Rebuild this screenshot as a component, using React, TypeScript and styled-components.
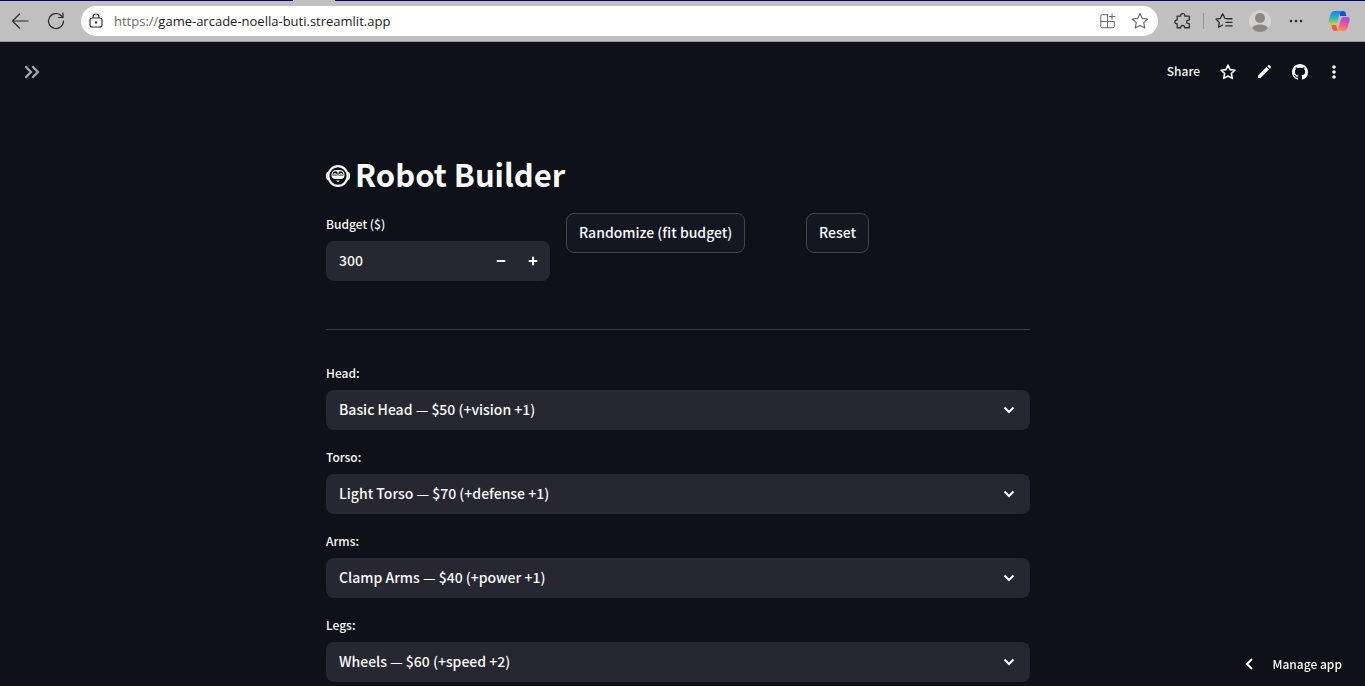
import React from "react";
import styled, { createGlobalStyle } from "styled-components";

const GlobalStyle = createGlobalStyle`
  * { box-sizing: border-box; }
  body { margin: 0; background: #0e1117; overflow: hidden; }
  button, input, select { font: inherit; color: inherit; }
  svg { display: block; }
`;

const Window = styled.div`
  display: flex;
  flex-direction: column;
  height: 100vh;
  color: #fafafa;
  font-family: "Noto Sans CJK SC", "Open Sans", sans-serif;
  font-size: 14px;
  font-weight: 500;
  line-height: 20px;
`;

const BrowserBar = styled.header`
  flex: none;
  display: flex;
  align-items: center;
  height: 42px;
  padding: 0 14px 0 10px;
  background: #c0c0c0;
  border-top: 1px solid #00007b;
  border-bottom: 1px solid #9b9b9b;
  color: #2b2b2b;
`;

const TabNotch = styled.span`
  position: absolute;
  top: 0;
  left: 293px;
  width: 42px;
  height: 1px;
  background: #c0c0c0;
`;

const IconButton = styled.button<{ $size?: number; $color?: string }>`
  flex: none;
  display: grid;
  place-items: center;
  width: ${(p) => p.$size ?? 20}px;
  height: ${(p) => p.$size ?? 20}px;
  padding: 0;
  border: 0;
  background: none;
  color: ${(p) => p.$color ?? "inherit"};
`;

const IconGroup = styled.div<{ $gap: number }>`
  display: flex;
  align-items: center;
  gap: ${(p) => p.$gap}px;
`;

const AddressBar = styled.div`
  flex: 1;
  display: flex;
  align-items: center;
  gap: 10px;
  height: 30px;
  margin: 0 15px;
  padding: 0 8px 0 7px;
  border-radius: 15px;
  background: #fff;
`;

const Url = styled.a`
  flex: 1;
  color: #1b1b1b;
  text-decoration: none;
  font: 13px/20px "Open Sans", "Noto Sans", sans-serif;
  span { color: #6b6b6b; }
`;

const Divider = styled.span`
  width: 1px;
  height: 16px;
  background: #959595;
`;

const Page = styled.div`
  flex: 1;
  min-height: 0;
  overflow: hidden;
`;

const Toolbar = styled.div`
  display: flex;
  align-items: center;
  justify-content: space-between;
  height: 60px;
  padding: 0 23px 0 22px;
`;

const TextButton = styled.button`
  padding: 0 0 2px;
  border: 0;
  background: none;
  font-size: 12px;
`;

const Content = styled.div`
  padding: 48px 9px 0 0;
`;

const Main = styled.main`
  max-width: 704px;
  margin: 0 auto;
`;

const Title = styled.h1`
  display: flex;
  align-items: center;
  gap: 5px;
  margin: 0 0 15px;
  font-size: 31px;
  line-height: 48px;
  font-weight: 700;
  svg { margin-top: 4px; }
`;

const Controls = styled.section`
  display: grid;
  grid-template-columns: repeat(3, minmax(0, 1fr));
  align-items: start;
  gap: 16px;
`;

const Field = styled.div`
  display: flex;
  flex-direction: column;
  gap: 6px;
`;

const Label = styled.label`
  font-size: 12px;
  line-height: 22px;
`;

const NumberBox = styled.div`
  display: flex;
  align-items: center;
  height: 40px;
  padding-right: 1px;
  border-radius: 8px;
  background: #262730;
`;

const NumberInput = styled.input`
  flex: 1;
  min-width: 0;
  height: 40px;
  padding: 0 13px 2px;
  border: 0;
  background: none;
`;

const OutlineButton = styled.button`
  justify-self: start;
  height: 40px;
  padding: 0 12px 2px;
  border: 1px solid #41444c;
  border-radius: 8px;
  background: #131720;
`;

const Rule = styled.hr`
  height: 1px;
  margin: 48px 0 32px;
  border: 0;
  background: #3b3d45;
`;

const Parts = styled.section`
  display: flex;
  flex-direction: column;
  gap: 16px;
`;

const SelectBox = styled.div`
  display: grid;
  align-items: center;
  > * { grid-area: 1 / 1; }
  svg { justify-self: end; margin-right: 15px; pointer-events: none; }
`;

const Select = styled.select`
  appearance: none;
  height: 40px;
  padding: 0 40px 2px 13px;
  border: 0;
  border-radius: 8px;
  background: #262730;
`;

const ManageButton = styled.button`
  position: fixed;
  right: 23px;
  bottom: 10px;
  display: flex;
  align-items: center;
  gap: 20px;
  padding: 0;
  border: 0;
  background: none;
  font-size: 12px;
  line-height: 24px;
`;

const Line = ({ d, size = 20, width = 1.2 }: { d: string; size?: number; width?: number }) => (
  <svg width={size} height={size} viewBox="0 0 20 20" fill="none" stroke="currentColor" strokeWidth={width} strokeLinecap="round" strokeLinejoin="round">
    <path d={d} />
  </svg>
);

const STAR = "M10 2.4l2.3 5 5.4.6-4 3.7 1.1 5.4-4.8-2.7-4.8 2.7 1.1-5.4-4-3.7 5.4-.6z";

const parts = [
  { id: "head", label: "Head:", value: "Basic Head — $50 (+vision +1)" },
  { id: "torso", label: "Torso:", value: "Light Torso — $70 (+defense +1)" },
  { id: "arms", label: "Arms:", value: "Clamp Arms — $40 (+power +1)" },
  { id: "legs", label: "Legs:", value: "Wheels — $60 (+speed +2)" },
];

const RobotFace = () => (
  <svg width="24" height="24" viewBox="0 0 24 24" fill="none" stroke="#fafafa">
    <ellipse cx="12" cy="12" rx="9.6" ry="9.8" strokeWidth="2.2" />
    <path d="M2 8.500Q.6 9.500.6 12T2 15.500M22 8.500q1.400 1 1.400 3.500T22 15.500" strokeWidth="1.600" />
    <path d="M5.500 11q0-5 5-5h3q5 0 5 5 0 4-4 4h-5q-4 0-4-4z" fill="#fafafa" stroke="none" />
    <path d="M6.500 11.500q0-4.200 3.200-4.200 1.900 0 1.900 2.200v2zM17.500 11.500q0-4.200-3.200-4.200-1.900 0-1.900 2.200v2z" fill="#0e1117" stroke="none" />
    <path d="M7.500 11q1.400-2.800 3.200 0M13.300 11q1.800-2.800 3.200 0" strokeWidth="1.100" />
    <path d="M10.200 16.500h3.600L12 18.300z" fill="#fafafa" stroke="none" />
  </svg>
);

const Github = () => (
  <svg width="16" height="16" viewBox="0 0 16 16" fill="currentColor">
    <path d="M8 0C3.580 0 0 3.580 0 8c0 3.540 2.290 6.530 5.470 7.590.4.070.55-.17.55-.38 0-.19-.01-.82-.01-1.490-2.010.37-2.530-.49-2.690-.94-.09-.23-.48-.94-.82-1.130-.28-.15-.68-.52-.01-.53.63-.01 1.080.58 1.230.82.72 1.210 1.870.87 2.330.66.070-.52.28-.87.51-1.070-1.780-.2-3.640-.89-3.640-3.950 0-.87.31-1.590.82-2.150-.08-.2-.36-1.020.08-2.120 0 0 .67-.21 2.200.82.64-.18 1.320-.27 2-.27s1.360.09 2 .27c1.530-1.040 2.200-.82 2.200-.82.44 1.100.16 1.920.08 2.120.51.56.82 1.270.82 2.150 0 3.070-1.870 3.750-3.650 3.950.29.25.54.73.54 1.480 0 1.070-.01 1.930-.01 2.200 0 .21.15.46.55.38A8.010 8.010 0 0 0 16 8c0-4.420-3.580-8-8-8z" />
  </svg>
);

const Copilot = () => (
  <svg width="24" height="24" viewBox="0 0 24 24">
    <defs>
      <linearGradient id="cool" x1="0" y1="0" x2="0" y2="1">
        <stop offset="0" stopColor="#1684e8" /><stop offset=".5" stopColor="#2ab4c9" /><stop offset="1" stopColor="#e5cf25" />
      </linearGradient>
      <linearGradient id="warm" x1=".7" y1="0" x2=".3" y2="1">
        <stop offset="0" stopColor="#a54be8" /><stop offset=".5" stopColor="#f0529a" /><stop offset="1" stopColor="#ff9a4a" />
      </linearGradient>
    </defs>
    <path d="M13 2h3q2 0 2.700 2l.8 3H13z" fill="#1854c4" />
    <path d="M7.500 2H15q-1.600.5-2.300 3l-2.200 8q-.8 3-3.500 3H4Q.5 16 1.500 12l2.200-7Q4.700 2 7.500 2z" fill="url(#cool)" />
    <path d="M11 22H8q-2 0-2.700-2l-.8-4H9z" fill="#f05a3c" />
    <path d="M16.500 22H9q1.600-.5 2.300-3l2.200-8q.8-3 3.500-3h3q3.500 0 2.500 4l-2.200 7q-1 3-4 3z" fill="url(#warm)" />
  </svg>
);

export default function App() {
  return (
    <Window>
      <GlobalStyle />
      <BrowserBar>
        <TabNotch />
        <IconGroup as="nav" $gap={16} aria-label="Browser navigation">
          <IconButton aria-label="Back"><Line d="M18 10H2.500M9.500 3L2.500 10l7 7" /></IconButton>
          <IconButton aria-label="Reload"><Line d="M17.500 10a7.500 7.500 0 1 1-2.400-5.500L17 6.500M17 2v4.500h-4.500" /></IconButton>
        </IconGroup>
        <AddressBar>
          <IconButton $size={16} aria-label="Site information">
            <svg width="14" height="16" viewBox="0 0 14 16" fill="none" stroke="currentColor" strokeWidth="1.100">
              <rect x="1" y="5" width="12" height="9" rx="2" /><path d="M4 5V4q0-3 3-3t3 3v1" /><circle cx="7" cy="9.500" r=".6" fill="currentColor" />
            </svg>
          </IconButton>
          <Url href="https://game-arcade-noella-buti.streamlit.app"><span>https://</span>game-arcade-noella-buti.streamlit.app</Url>
          <IconGroup $gap={12}>
            <IconButton $color="#666" aria-label="Install app"><Line size={18} width={1.1} d="M10 3H3.500Q2 3 2 4.500V16q0 1.500 1.500 1.500h12Q17 17.500 17 16v-5.500H2M9.500 3v14.500M14.500 2v6M11.500 5h6" /></IconButton>
            <IconButton $color="#666" aria-label="Add to favorites"><Line width={1.1} d={STAR} /></IconButton>
          </IconGroup>
        </AddressBar>
        <IconGroup $gap={21}>
          <IconGroup $gap={14}>
            <IconGroup $gap={10}>
              <IconButton aria-label="Extensions"><Line size={18} width={1.4} d="M3.500 4.500h4q-.3-2.800 2.200-2.800t2.300 2.800h5V9q-3-.2-3 2t3 2v4.500h-5q.2-2.500-2.300-2.500t-2.200 2.500h-4V13q-2.500 0-2.500-2t2.500-2z" /></IconButton>
              <Divider />
              <IconButton aria-label="Favorites"><Line size={18} width={1.4} d="M14 7.500l-3-.5L8.500 2 6 7l-5 .8 3.700 3.700L4 17l4.500-2.500M13 7.500h6M12 11.500h7M12 15.500h7" /></IconButton>
            </IconGroup>
            <IconButton $size={24} aria-label="Profile">
              <svg width="24" height="24" viewBox="0 0 24 24"><circle cx="12" cy="12" r="11" fill="#d4d2d0" /><circle cx="12" cy="9" r="5" fill="#8b8784" /><path d="M4 19q2-3.500 8-3.500t8 3.500q-3 4-8 4t-8-4z" fill="#8b8784" /></svg>
            </IconButton>
            <IconButton aria-label="Settings and more"><svg width="14" height="4" fill="currentColor"><circle cx="2" cy="2" r="1.300" /><circle cx="7" cy="2" r="1.300" /><circle cx="12" cy="2" r="1.300" /></svg></IconButton>
          </IconGroup>
          <IconButton $size={24} aria-label="Copilot"><Copilot /></IconButton>
        </IconGroup>
      </BrowserBar>
      <Page>
        <Toolbar>
          <IconButton $color="#a3a8b0" aria-label="Open sidebar"><Line width={2.4} d="M4 5l5 5-5 5M11 5l5 5-5 5" /></IconButton>
          <IconGroup $gap={18}>
            <TextButton>Share</TextButton>
            <IconGroup $gap={16}>
              <IconButton aria-label="Star"><Line width={1.8} size={18} d={STAR} /></IconButton>
              <IconButton aria-label="Edit"><svg width="16" height="16" viewBox="0 0 16 16" fill="currentColor"><path d="M2 11.500L10.500 3 13 5.500 4.500 14H2zM11.300 2.200l1-1q.6-.5 1.200 0l1.300 1.300q.5.600 0 1.200l-1 1z" /></svg></IconButton>
              <IconButton aria-label="View source"><Github /></IconButton>
              <IconButton $size={16} aria-label="More options"><svg width="4" height="14" fill="currentColor"><circle cx="2" cy="2" r="1.800" /><circle cx="2" cy="7" r="1.800" /><circle cx="2" cy="12" r="1.800" /></svg></IconButton>
            </IconGroup>
          </IconGroup>
        </Toolbar>
        <Content>
          <Main>
            <Title><RobotFace />Robot Builder</Title>
            <Controls>
              <Field>
                <Label htmlFor="budget">Budget ($)</Label>
                <NumberBox>
                  <NumberInput id="budget" inputMode="numeric" defaultValue="300" />
                  <IconButton $size={32} aria-label="Decrease"><Line width={2} d="M6.500 10h7" /></IconButton>
                  <IconButton $size={32} aria-label="Increase"><Line width={2} d="M6.500 10h7M10 6.500v7" /></IconButton>
                </NumberBox>
              </Field>
              <OutlineButton>Randomize (fit budget)</OutlineButton>
              <OutlineButton>Reset</OutlineButton>
            </Controls>
            <Rule />
            <Parts>
              {parts.map((p) => (
                <Field key={p.id}>
                  <Label htmlFor={p.id}>{p.label}</Label>
                  <SelectBox>
                    <Select id={p.id}><option>{p.value}</option></Select>
                    <svg width="12" height="12" viewBox="0 0 12 12" fill="none" stroke="currentColor" strokeWidth="2"><path d="M1.500 3.500L6 8l4.500-4.500" /></svg>
                  </SelectBox>
                </Field>
              ))}
            </Parts>
          </Main>
        </Content>
        <ManageButton>
          <svg width="8" height="12" viewBox="0 0 8 12" fill="none" stroke="currentColor" strokeWidth="2"><path d="M7 1L2 6l5 5" /></svg>
          Manage app
        </ManageButton>
      </Page>
    </Window>
  );
}
